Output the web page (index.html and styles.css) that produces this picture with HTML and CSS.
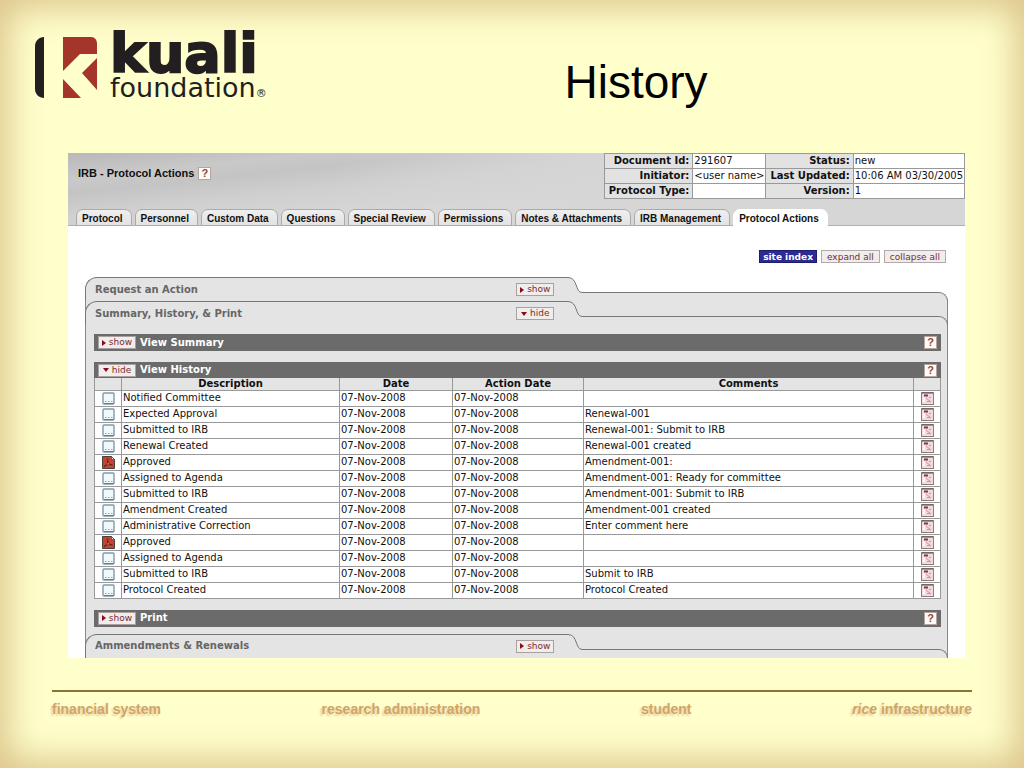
FILE: index.html
```html
<!DOCTYPE html>
<html lang="en">

<head>
    <meta charset="utf-8">
    <meta name="viewport" content="width=device-width, initial-scale=1">
    <title>Kuali Foundation - History</title>
    <link rel="stylesheet" href="styles.css">
</head>

<body>
    <!-- icons -->
    <svg class="icon-defs" width="0" height="0" aria-hidden="true">
        <symbol id="icon-note" viewBox="0 0 13 13">
            <rect x="1" y="1" width="11" height="11" rx="1" fill="#f2f7f9" stroke="#7f9bab" stroke-width="1.4"/>
            <path d="M3 9.500h1.500M6 9.500h1.500M9 9.500h1.500" stroke="#8fa9a0" stroke-width="1"/>
            <path d="M2 11.500h10" stroke="#5f7f92" stroke-width="1"/>
        </symbol>
        <symbol id="icon-pdf" viewBox="0 0 13 13">
            <path d="M.5.5h9l3 3v9H.5z" fill="#c8432f" stroke="#4b4040"/>
            <path d="M9.500.500v3h3z" fill="#eee" stroke="#4b4040" stroke-width=".7"/>
            <path d="M2 10.500c3-1 4.500-5 4-7.500-.300-1-1.500 0-.500 2 1 2.500 3 4 5 4-1.500-1-5-.500-8.500 1.500z" fill="#f39a86" stroke="#5a1710" stroke-width=".8"/>
        </symbol>
        <symbol id="icon-form" viewBox="0 0 13 13">
            <rect x=".5" y=".5" width="12" height="12" fill="#f3d9de" stroke="#8c7d80"/>
            <path d="M1 1h11" stroke="#5e5557"/>
            <path d="M3 3.500h4" stroke="#75404b" stroke-width="2"/>
            <path d="M2 6.500h2M2 9h2" stroke="#ffffff" stroke-width="2"/>
            <path d="M5 6l5 4M6 9.500h4M8 5.500h2" stroke="#d6909d"/>
        </symbol>
    </svg>

    <div class="slide">
        <!-- header -->
        <header class="slide-header">
            <div class="logo">
                <svg class="logo__mark" viewBox="0 0 62 62" aria-hidden="true">
                    <path d="M9 0v61C4 61 0 57 0 52V9C0 4 4 0 9 0z" fill="#231f20"/>
                    <path d="M28 0h28c4 0 6 3 6 7v10H45L28 34z" fill="#a5352a"/>
                    <path d="M62 21v32L47 36z" fill="#a5352a"/>
                    <path d="M28 42l18 19H28z" fill="#a5352a"/>
                </svg>
                <div class="logo__text">
                    <span class="logo__name">kuali</span>
                    <span class="logo__sub">foundation<span class="logo__reg">®</span></span>
                </div>
            </div>
            <h1 class="slide-header__title">History</h1>
        </header>

        <!-- application -->
        <main class="app">
            <div class="app-header">
                <div class="app-header__top">
                    <h2 class="app-header__title">IRB - Protocol Actions <button class="help" type="button">?</button></h2>
                    <table class="doc-info">
                        <tr>
                            <th>Document Id:</th><td>291607</td>
                            <th>Status:</th><td>new</td>
                        </tr>
                        <tr>
                            <th>Initiator:</th><td>&lt;user name&gt;</td>
                            <th>Last Updated:</th><td>10:06 AM 03/30/2005</td>
                        </tr>
                        <tr>
                            <th>Protocol Type:</th><td></td>
                            <th>Version:</th><td>1</td>
                        </tr>
                    </table>
                </div>
                <nav class="tabs">
                    <a class="tabs__tab" href="#">Protocol</a>
                    <a class="tabs__tab" href="#">Personnel</a>
                    <a class="tabs__tab" href="#">Custom Data</a>
                    <a class="tabs__tab" href="#">Questions</a>
                    <a class="tabs__tab" href="#">Special Review</a>
                    <a class="tabs__tab" href="#">Permissions</a>
                    <a class="tabs__tab" href="#">Notes &amp; Attachments</a>
                    <a class="tabs__tab" href="#">IRB Management</a>
                    <a class="tabs__tab tabs__tab--active" href="#">Protocol Actions</a>
                </nav>
            </div>

            <div class="toolbar">
                <button class="toolbar__button toolbar__button--primary" type="button">site index</button>
                <button class="toolbar__button" type="button">expand all</button>
                <button class="toolbar__button" type="button">collapse all</button>
            </div>

            <!-- sections -->
            <section class="section section--first">
                <div class="section-head">
                    <div class="section-head__tab">
                        <h3>Request an Action</h3>
                        <button class="toggle toggle--show" type="button">show</button>
                    </div>
                    <svg class="section-head__curve" viewBox="0 0 14 24" aria-hidden="true">
                        <path d="M0 .5C10 .5 7 15.500 14 15.500V24H0z" fill="#e4e4e4"/>
                        <path d="M0 .5C10 .5 7 15.500 14 15.500" fill="none" stroke="#777"/>
                    </svg>
                    <div class="section-head__rest"></div>
                </div>
            </section>

            <section class="section">
                <div class="section-head">
                    <div class="section-head__tab">
                        <h3>Summary, History, &amp; Print</h3>
                        <button class="toggle toggle--hide" type="button">hide</button>
                    </div>
                    <svg class="section-head__curve" viewBox="0 0 14 24" aria-hidden="true">
                        <path d="M0 .5C10 .5 7 15.500 14 15.500" fill="none" stroke="#777"/>
                    </svg>
                    <div class="section-head__rest"></div>
                </div>
                <div class="section__body">
                    <div class="bar">
                        <button class="toggle toggle--show" type="button">show</button>
                        <h4>View Summary</h4>
                        <button class="help" type="button">?</button>
                    </div>

                    <div class="history">
                        <div class="bar">
                            <button class="toggle toggle--hide" type="button">hide</button>
                            <h4>View History</h4>
                            <button class="help" type="button">?</button>
                        </div>
                        <table class="history-table">
                            <colgroup>
                                <col class="col-icon">
                                <col class="col-description">
                                <col class="col-date">
                                <col class="col-action">
                                <col>
                                <col class="col-icon">
                            </colgroup>
                            <thead>
                                <tr>
                                    <th></th><th>Description</th><th>Date</th><th>Action Date</th><th>Comments</th><th></th>
                                </tr>
                            </thead>
                            <tbody>
                                <tr>
                                    <td><svg class="icon"><use href="#icon-note"/></svg></td>
                                    <td>Notified Committee</td><td>07-Nov-2008</td><td>07-Nov-2008</td><td></td>
                                    <td><svg class="icon"><use href="#icon-form"/></svg></td>
                                </tr>
                                <tr>
                                    <td><svg class="icon"><use href="#icon-note"/></svg></td>
                                    <td>Expected Approval</td><td>07-Nov-2008</td><td>07-Nov-2008</td><td>Renewal-001</td>
                                    <td><svg class="icon"><use href="#icon-form"/></svg></td>
                                </tr>
                                <tr>
                                    <td><svg class="icon"><use href="#icon-note"/></svg></td>
                                    <td>Submitted to IRB</td><td>07-Nov-2008</td><td>07-Nov-2008</td><td>Renewal-001: Submit to IRB</td>
                                    <td><svg class="icon"><use href="#icon-form"/></svg></td>
                                </tr>
                                <tr>
                                    <td><svg class="icon"><use href="#icon-note"/></svg></td>
                                    <td>Renewal Created</td><td>07-Nov-2008</td><td>07-Nov-2008</td><td>Renewal-001 created</td>
                                    <td><svg class="icon"><use href="#icon-form"/></svg></td>
                                </tr>
                                <tr>
                                    <td><svg class="icon"><use href="#icon-pdf"/></svg></td>
                                    <td>Approved</td><td>07-Nov-2008</td><td>07-Nov-2008</td><td>Amendment-001:</td>
                                    <td><svg class="icon"><use href="#icon-form"/></svg></td>
                                </tr>
                                <tr>
                                    <td><svg class="icon"><use href="#icon-note"/></svg></td>
                                    <td>Assigned to Agenda</td><td>07-Nov-2008</td><td>07-Nov-2008</td><td>Amendment-001: Ready for committee</td>
                                    <td><svg class="icon"><use href="#icon-form"/></svg></td>
                                </tr>
                                <tr>
                                    <td><svg class="icon"><use href="#icon-note"/></svg></td>
                                    <td>Submitted to IRB</td><td>07-Nov-2008</td><td>07-Nov-2008</td><td>Amendment-001: Submit to IRB</td>
                                    <td><svg class="icon"><use href="#icon-form"/></svg></td>
                                </tr>
                                <tr>
                                    <td><svg class="icon"><use href="#icon-note"/></svg></td>
                                    <td>Amendment Created</td><td>07-Nov-2008</td><td>07-Nov-2008</td><td>Amendment-001 created</td>
                                    <td><svg class="icon"><use href="#icon-form"/></svg></td>
                                </tr>
                                <tr>
                                    <td><svg class="icon"><use href="#icon-note"/></svg></td>
                                    <td>Administrative Correction</td><td>07-Nov-2008</td><td>07-Nov-2008</td><td>Enter comment here</td>
                                    <td><svg class="icon"><use href="#icon-form"/></svg></td>
                                </tr>
                                <tr>
                                    <td><svg class="icon"><use href="#icon-pdf"/></svg></td>
                                    <td>Approved</td><td>07-Nov-2008</td><td>07-Nov-2008</td><td></td>
                                    <td><svg class="icon"><use href="#icon-form"/></svg></td>
                                </tr>
                                <tr>
                                    <td><svg class="icon"><use href="#icon-note"/></svg></td>
                                    <td>Assigned to Agenda</td><td>07-Nov-2008</td><td>07-Nov-2008</td><td></td>
                                    <td><svg class="icon"><use href="#icon-form"/></svg></td>
                                </tr>
                                <tr>
                                    <td><svg class="icon"><use href="#icon-note"/></svg></td>
                                    <td>Submitted to IRB</td><td>07-Nov-2008</td><td>07-Nov-2008</td><td>Submit to IRB</td>
                                    <td><svg class="icon"><use href="#icon-form"/></svg></td>
                                </tr>
                                <tr>
                                    <td><svg class="icon"><use href="#icon-note"/></svg></td>
                                    <td>Protocol Created</td><td>07-Nov-2008</td><td>07-Nov-2008</td><td>Protocol Created</td>
                                    <td><svg class="icon"><use href="#icon-form"/></svg></td>
                                </tr>
                            </tbody>
                        </table>
                    </div>

                    <div class="bar">
                        <button class="toggle toggle--show" type="button">show</button>
                        <h4>Print</h4>
                        <button class="help" type="button">?</button>
                    </div>
                </div>
            </section>

            <section class="section">
                <div class="section-head">
                    <div class="section-head__tab">
                        <h3>Ammendments &amp; Renewals</h3>
                        <button class="toggle toggle--show" type="button">show</button>
                    </div>
                    <svg class="section-head__curve" viewBox="0 0 14 24" aria-hidden="true">
                        <path d="M0 .5C10 .5 7 15.500 14 15.500" fill="none" stroke="#777"/>
                    </svg>
                    <div class="section-head__rest"></div>
                </div>
            </section>
        </main>

        <!-- footer -->
        <footer class="slide-footer">
            <span>financial system</span>
            <span>research administration</span>
            <span>student</span>
            <span><em>rice</em> infrastructure</span>
        </footer>
    </div>
</body>

</html>
```
FILE: styles.css
```css
* {
    box-sizing: border-box;
}
body {
    margin: 0;
    font: normal 10px/12px 'DejaVu Sans', Verdana, sans-serif;
    color: #111111;
}
h1, h2, h3, h4 {
    margin: 0;
}
button {
    font-family: inherit;
    cursor: pointer;
}
.icon-defs {
    position: absolute;
}

/* ===== */
/* Slide */
/* ===== */
.slide {
    min-height: 100vh;
    padding: 33px 52px 0 35px;
    background-color: #ffffcc;
    box-shadow: inset 0 0 36px 8px #dcc48a;
}
.slide-header {
    display: flex;
    height: 120px;
}
.slide-header__title {
    flex: 1;
    padding: 22px 0 0 17px;
    font: normal 46px/54px 'Liberation Sans', Arial, sans-serif;
    text-align: center;
    color: #000000;
}

/* ==== */
/* Logo */
/* ==== */
.logo {
    display: flex;
    gap: 13px;
    width: 248px;
    color: #231f20;
}
.logo__mark {
    width: 62px;
    height: 62px;
    margin-top: 4px;
}
.logo__text {
    display: flex;
    flex-direction: column;
}
.logo__name {
    font-size: 54px;
    font-weight: bold;
    line-height: 42px;
    -webkit-text-stroke: 2px #231f20;
}
.logo__sub {
    font-size: 27px;
    line-height: 26px;
    white-space: nowrap;
}
.logo__reg {
    font-size: 11px;
}

/* ========== */
/* App header */
/* ========== */
.app {
    margin: 0 7px 0 33px;
    background-color: #ffffff;
}
.app-header {
    background: linear-gradient(to right, rgba(214, 214, 214, 0) 30%, #d6d6d6 64%), linear-gradient(174deg, #b8b8b8 0, #c9c9c9 16%, #c4c4c4 24%, #d0d0d0 38%, #d8d8d8 60%);
    box-shadow: inset 0 -1px #b0b0b0;
}
.app-header__top {
    display: flex;
    justify-content: space-between;
    height: 56px;
}
.app-header__title {
    display: flex;
    gap: 4px;
    align-items: center;
    height: 40px;
    padding-left: 10px;
    font: bold 11px/14px 'Liberation Sans', Arial, sans-serif;
}
.help {
    width: 13px;
    height: 13px;
    padding: 0;
    border: 1px solid #b5a59f;
    background-color: #fffaf5;
    color: #8c4a3c;
    font: bold 11px/11px 'Liberation Sans', Arial, sans-serif;
}
.doc-info {
    align-self: flex-start;
    border-collapse: collapse;
    white-space: nowrap;
}
.doc-info th,
.doc-info td {
    height: 15px;
    padding: 0 1px;
    border: 1px solid #999999;
}
.doc-info th {
    padding: 0 3px 0 4px;
    background-color: #e2e2e2;
    text-align: right;
}
.doc-info td {
    background-color: #ffffff;
}

/* ==== */
/* Tabs */
/* ==== */
.tabs {
    display: flex;
    gap: 3px;
    padding-left: 8px;
}
.tabs__tab {
    height: 17px;
    padding: 2px 8px 0 5px;
    border: 1px solid #aaaaaa;
    border-radius: 7px 7px 0 0;
    background: linear-gradient(#efefef, #e2e2e2);
    color: #111111;
    font: bold 10px/14px 'Liberation Sans', Arial, sans-serif;
    text-decoration: none;
    white-space: nowrap;
}
.tabs__tab--active {
    border-color: #ffffff;
    background: #ffffff;
}

/* ======= */
/* Toolbar */
/* ======= */
.toolbar {
    display: flex;
    justify-content: flex-end;
    gap: 4px;
    padding: 24px 19px 14px 0;
}
.toolbar__button {
    height: 13px;
    padding: 0 5px;
    border: 1px solid #b3a9a9;
    background-color: #f0eded;
    color: #7d2a2a;
    font-size: 9px;
    line-height: 10px;
}
.toolbar__button--primary {
    padding: 0 3px;
    border-color: #1c1c6c;
    background-color: #2b2b93;
    color: #ffffff;
    font-weight: bold;
}

/* ======== */
/* Sections */
/* ======== */
.section {
    margin: 0 17px;
    border: solid #888888;
    border-width: 0 1px;
    background-color: #e4e4e4;
}
.section--first {
    border-color: transparent;
    background: none;
}
.section-head {
    display: flex;
    height: 24px;
    margin: 0 -1px;
}
.section-head__tab {
    display: flex;
    flex: 0 0 56%;
    justify-content: space-between;
    align-items: center;
    padding: 0 14px 0 9px;
    border: solid #777777;
    border-width: 1px 0 0 1px;
    border-radius: 12px 0 0 0;
    background-color: #e4e4e4;
}
.section-head h3 {
    font-size: 10px;
    color: #666666;
}
.section-head__curve {
    flex: none;
    width: 14px;
    height: 24px;
}
.section-head__rest {
    flex: 1;
    margin-top: 15px;
    border: solid #777777;
    border-width: 1px 1px 0 0;
    border-radius: 0 10px 0 0;
    background-color: #e4e4e4;
}
.section__body {
    display: flex;
    flex-direction: column;
    gap: 11px;
    padding: 9px 6px 7px 8px;
}

/* ======= */
/* Toggles */
/* ======= */
.toggle {
    display: flex;
    justify-content: center;
    align-items: center;
    gap: 3px;
    width: 38px;
    height: 13px;
    padding: 0;
    border: 1px solid #aaa0a0;
    background-color: #f0eded;
    color: #7d2a2a;
    font-size: 9px;
    line-height: 11px;
}
.toggle::before {
    content: '';
    border: solid transparent;
}
.toggle--show::before {
    border-width: 3px 0 3px 4px;
    border-left-color: #8c0a14;
}
.toggle--hide::before {
    border-width: 4px 3px 0;
    border-top-color: #8c0a14;
}

/* ==== */
/* Bars */
/* ==== */
.bar {
    display: flex;
    align-items: center;
    gap: 4px;
    height: 17px;
    padding: 0 4px;
    background-color: #6b6b6b;
    color: #ffffff;
}
.bar h4 {
    flex: 1;
    font-size: 10px;
}
.history .bar {
    height: 16px;
}

/* ============= */
/* History table */
/* ============= */
.history-table {
    width: 100%;
    table-layout: fixed;
    border-collapse: collapse;
}
.col-icon {
    width: 27px;
}
.col-description {
    width: 218px;
}
.col-date {
    width: 113px;
}
.col-action {
    width: 131px;
}
.history-table th,
.history-table td {
    height: 16px;
    padding: 0 1px;
    border: 1px solid #999999;
    background-color: #ffffff;
}
.history-table th {
    height: 12px;
    border-top: 0;
    background-color: #e4e4e4;
    line-height: 11px;
}
.history-table td:first-child,
.history-table td:last-child {
    text-align: center;
}
.icon {
    display: block;
    width: 13px;
    height: 13px;
    margin: 0 auto;
}

/* ====== */
/* Footer */
/* ====== */
.slide-footer {
    display: flex;
    justify-content: space-between;
    margin: 32px 0 0 17px;
    padding-top: 9px;
    border-top: 2px solid #8a7434;
    color: #cfa468;
    font: bold 14px/16px 'Liberation Sans', Arial, sans-serif;
    text-shadow: -2px 2px 2px #ecd09c;
}
```
